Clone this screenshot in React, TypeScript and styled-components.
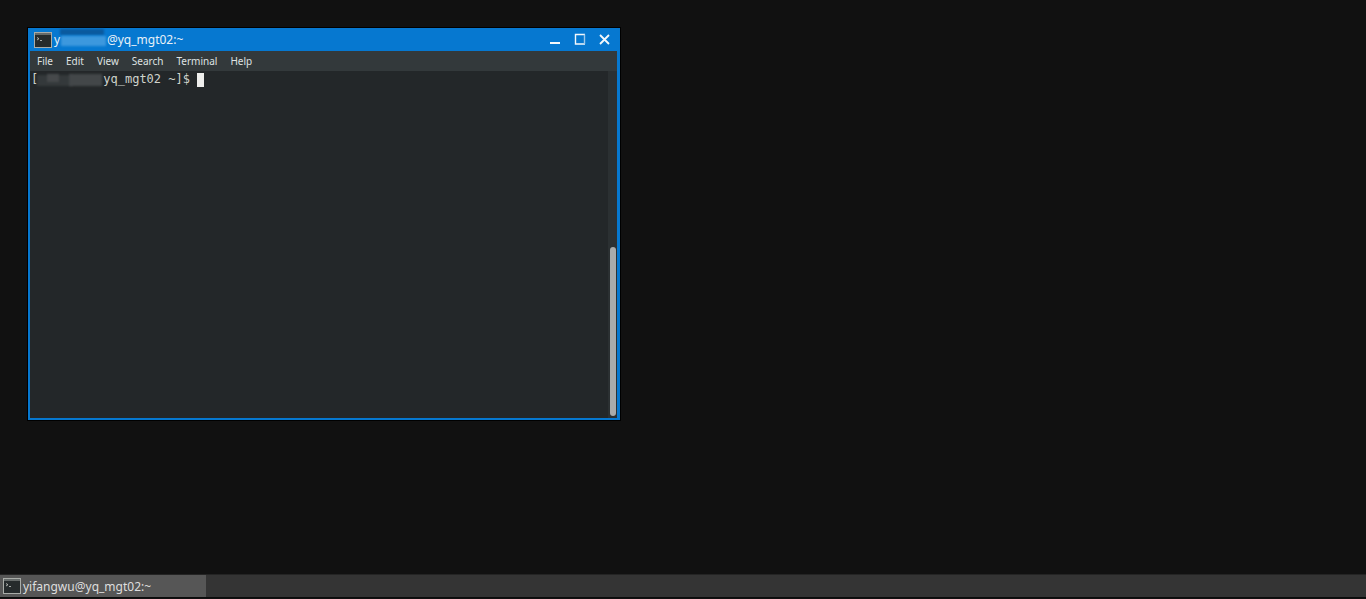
import styled, { createGlobalStyle } from 'styled-components';

const GlobalStyle = createGlobalStyle`
  html, body, #root {
    margin: 0;
    height: 100%;
  }
  body {
    background: #111111;
    overflow: hidden;
  }
`;

const Desktop = styled.div`
  width: 1366px;
  height: 599px;
  display: flex;
  flex-direction: column;
  justify-content: space-between;
  background: #111111;
`;

const WindowArea = styled.div`
  padding: 28px 0 0 28px;
`;

const TerminalWindow = styled.div`
  width: 592px;
  height: 392px;
  box-sizing: border-box;
  display: flex;
  flex-direction: column;
  background: #0678d0;
  box-shadow: 0 0 0 1px #000;
`;

const TitleBar = styled.div`
  height: 23px;
  flex: none;
  display: flex;
  align-items: center;
  padding: 0 9px 0 6px;
  color: #e8f1f8;
  font: 12px 'Noto Sans', sans-serif;
`;

const TitleText = styled.span`
  position: relative;
  margin-left: 2px;
  flex: 1;
  white-space: pre;
`;

const Smudge = styled.i<{ $left: number; $top: number; $width: number; $height: number; $color: string }>`
  position: absolute;
  left: ${p => p.$left}px;
  top: ${p => p.$top}px;
  width: ${p => p.$width}px;
  height: ${p => p.$height}px;
  background: ${p => p.$color};
  filter: blur(1px);
`;

const WindowButtons = styled.div`
  display: flex;
  align-items: center;
  gap: 12px;
`;

const Body = styled.div`
  flex: 1;
  min-height: 0;
  margin: 0 3px 2px 2px;
  display: flex;
  flex-direction: column;
`;

const MenuBar = styled.div`
  height: 20px;
  flex: none;
  display: flex;
  align-items: center;
  gap: 13px;
  padding-left: 7px;
  background: #33393b;
  color: #dfe2e2;
  font: 10px 'Noto Sans', sans-serif;
`;

const TerminalPane = styled.div`
  flex: 1;
  min-height: 0;
  display: flex;
  background: #232729;
`;

const Screen = styled.div`
  flex: 1;
  padding: 1px 0 0 1px;
  color: #cfd3cc;
  font: 12px/15px 'DejaVu Sans Mono', monospace;
  white-space: pre;
`;

const PromptLine = styled.div`
  position: relative;
  display: flex;
  align-items: center;
`;

const Cursor = styled.span`
  width: 7px;
  height: 14px;
  margin-left: 7px;
  background: #eeeeec;
`;

const ScrollTrack = styled.div`
  width: 9px;
  flex: none;
  display: flex;
  flex-direction: column;
  justify-content: flex-end;
  align-items: center;
  padding-bottom: 2px;
  background: #2b3032;
`;

const ScrollThumb = styled.div`
  width: 6px;
  height: 169px;
  border-radius: 3px;
  background: #a9abab;
`;

const TaskBar = styled.div`
  height: 24px;
  margin-bottom: 1px;
  box-sizing: border-box;
  display: flex;
  background: #343434;
  border-top: 1px solid #242424;
  border-bottom: 1px solid #0c0c0c;
`;

const TaskButton = styled.div`
  width: 206px;
  display: flex;
  align-items: center;
  gap: 2px;
  padding-left: 3px;
  box-sizing: border-box;
  background: #565656;
  color: #dedede;
  font: 12px 'Noto Sans', sans-serif;
`;

const TerminalIcon = () => (
  <svg width="18" height="16" viewBox="0 0 18 16">
    <rect x="0.5" y="0.5" width="17" height="15" fill="#262b2c" stroke="#a9aca8" />
    <rect x="1" y="1" width="16" height="2" fill="#666b6a" />
    <path d="M3 5.5l2 1.2L3 8M6 8.5h2" fill="none" stroke="#c8cac6" strokeWidth="0.8" />
  </svg>
);

const MENU_ITEMS = ['File', 'Edit', 'View', 'Search', 'Terminal', 'Help'];

export default function App() {
  return (
    <Desktop>
      <GlobalStyle />
      <WindowArea>
        <TerminalWindow>
          <TitleBar>
            <TerminalIcon />
            <TitleText>
              y{'               '}@yq_mgt02:~
              <Smudge $left={6} $top={-2} $width={44} $height={6} $color="#0a5a9f" />
              <Smudge $left={7} $top={5} $width={45} $height={10} $color="#3c98de" />
            </TitleText>
            <WindowButtons>
              <svg width="13" height="13" viewBox="0 0 13 13">
                <path d="M2 10h10" stroke="#f4f8fb" strokeWidth="2" />
              </svg>
              <svg width="13" height="13" viewBox="0 0 13 13">
                <path d="M12 1.5H2.5v9.5H12" fill="none" stroke="#f4f8fb" strokeWidth="1.4" />
                <path d="M11.5 1.5v9.5" stroke="#9cc8ea" strokeWidth="1.4" />
              </svg>
              <svg width="13" height="13" viewBox="0 0 13 13">
                <path d="M2 2l9 9M11 2l-9 9" stroke="#f4f8fb" strokeWidth="1.8" />
              </svg>
            </WindowButtons>
          </TitleBar>
          <Body>
            <MenuBar>
              {MENU_ITEMS.map(item => (
                <span key={item}>{item}</span>
              ))}
            </MenuBar>
            <TerminalPane>
              <Screen>
                <PromptLine>
                  [{'         '}yq_mgt02 ~]$
                  <Cursor />
                  <Smudge $left={6} $top={3} $width={36} $height={11} $color="#34393b" />
                  <Smudge $left={16} $top={2} $width={12} $height={8} $color="#46494b" />
                  <Smudge $left={38} $top={2} $width={33} $height={12} $color="#434749" />
                </PromptLine>
              </Screen>
              <ScrollTrack>
                <ScrollThumb />
              </ScrollTrack>
            </TerminalPane>
          </Body>
        </TerminalWindow>
      </WindowArea>
      <TaskBar>
        <TaskButton>
          <TerminalIcon />
          yifangwu@yq_mgt02:~
        </TaskButton>
      </TaskBar>
    </Desktop>
  );
}
